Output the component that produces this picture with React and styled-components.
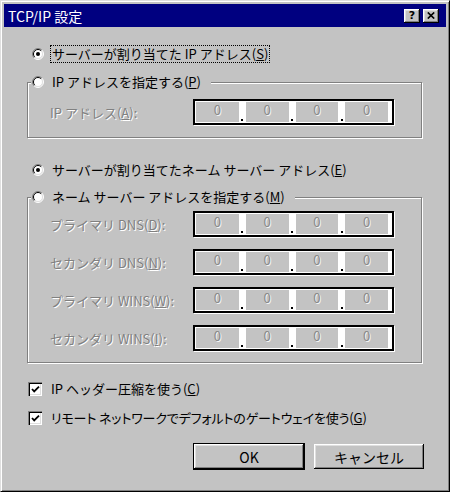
import { createGlobalStyle, styled } from "styled-components";

const FACE = "#c3c3c3";

const GlobalStyle = createGlobalStyle`
  html, body { margin: 0; padding: 0; background: ${FACE}; }
  body { font-family: "Noto Sans CJK JP", "Noto Sans", sans-serif; }
`;

const Window = styled.div`
  box-sizing: border-box;
  width: 450px;
  height: 492px;
  padding: 3px;
  display: flex;
  flex-direction: column;
  background: ${FACE};
  border: 1px solid;
  border-color: #dfdfdf #000 #000 #dfdfdf;
  box-shadow: inset 1px 1px 0 #fff, inset -1px -1px 0 #808080;
  font-family: "Noto Sans CJK JP", "Noto Sans", sans-serif;
  font-size: 13px;
  color: #000;
`;

const TitleBar = styled.div`
  height: 23px;
  flex: 0 0 auto;
  display: flex;
  align-items: center;
  justify-content: space-between;
  padding: 0 7px 0 4px;
  background: #000080;
  color: #fff;
`;

const Title = styled.span`
  font-size: 14px;
  line-height: 16px;
`;

const Caption = styled.div`
  display: flex;
  gap: 3px;
`;

const CapButton = styled.span`
  box-sizing: border-box;
  width: 16px;
  height: 14px;
  display: flex;
  align-items: center;
  justify-content: center;
  background: ${FACE};
  color: #000;
  font-family: "DejaVu Sans", sans-serif;
  font-weight: bold;
  font-size: 11px;
  line-height: 1;
  box-shadow: inset -1px -1px 0 #000, inset 1px 1px 0 #fff,
    inset -2px -2px 0 #808080, inset 2px 2px 0 #dfdfdf;
`;

const Body = styled.div`
  display: flex;
  flex-direction: column;
  padding: 17px 21px 0 23px;
`;

const OptionRow = styled.div`
  display: flex;
  align-items: center;
  gap: ${(p) => p.$gap || 6}px;
  height: 20px;
  margin-top: ${(p) => p.$mt || 0}px;
  padding-left: ${(p) => p.$pl || 0}px;
`;

const OptionLabel = styled.span`
  line-height: 16px;
  padding: 0 1px;
  border: 1px dotted ${(p) => (p.$focused ? "#000" : "transparent")};
  white-space: nowrap;
  font-feature-settings: ${(p) => (p.$narrow ? '"palt"' : "normal")};
  letter-spacing: ${(p) => (p.$narrow ? "-0.15px" : "normal")};
`;

const Group = styled.fieldset`
  margin: ${(p) => p.$mt}px 3px 0 0;
  padding: 0;
  min-width: 0;
  border: 1px solid #808080;
  box-shadow: inset 1px 1px 0 #fff, 1px 1px 0 #fff;
`;

const Legend = styled.legend`
  display: flex;
  align-items: center;
  gap: 6px;
  height: 20px;
  margin-left: 3px;
  padding: 0 8px 0 1px;
  background: ${FACE};
`;

const Rows = styled.div`
  display: flex;
  flex-direction: column;
  gap: 12px;
  padding: ${(p) => p.$pt}px 0 ${(p) => p.$pb}px 22px;
`;

const FieldRow = styled.div`
  display: grid;
  grid-template-columns: 143px 201px;
  align-items: center;
  height: 26px;
`;

const Disabled = styled.span`
  color: #808080;
  text-shadow: 1px 1px 0 #fff;
  white-space: nowrap;
`;

const IpBox = styled.div`
  box-sizing: border-box;
  width: 201px;
  height: 26px;
  display: flex;
  padding: 1px 4px 1px 1px;
  background: #fff;
  border: 2px solid #000;
  box-shadow: 1px 1px 0 #fff;
`;

const Octet = styled.span`
  flex: 1;
  display: flex;
  justify-content: center;
  background: ${FACE};
  color: #8a8a8a;
  text-shadow: 1px 1px 0 #f4f4f4;
  font-size: 13px;
  line-height: 16px;
`;

const Dot = styled.span`
  flex: 0 0 7px;
  display: flex;
  justify-content: center;
  align-items: flex-end;
  padding-bottom: 1px;
  &::after {
    content: "";
    width: 2px;
    height: 2px;
    background: #000;
  }
`;

const CheckBox = styled.span`
  box-sizing: border-box;
  width: 14px;
  height: 14px;
  flex: 0 0 14px;
  display: flex;
  align-items: center;
  justify-content: center;
  background: #fff;
  box-shadow: inset 1px 1px 0 #808080, inset 2px 2px 0 #000,
    inset -1px -1px 0 #fff, inset -2px -2px 0 #dfdfdf;
`;

const ButtonRow = styled.div`
  display: flex;
  justify-content: flex-end;
  gap: 8px;
  margin-top: 15px;
`;

const Button = styled.button`
  box-sizing: border-box;
  width: 112px;
  height: 27px;
  padding: 0;
  background: ${FACE};
  font-family: inherit;
  font-size: 14px;
  color: #000;
  border: 1px solid ${(p) => (p.$default ? "#000" : FACE)};
  box-shadow: inset -1px -1px 0 #000, inset 1px 1px 0 #fff,
    inset -2px -2px 0 #808080, inset 2px 2px 0 #dfdfdf;
`;

function Radio({ checked }) {
  return (
    <svg width="12" height="12" viewBox="0 0 12 12" style={{ flex: "0 0 12px" }}>
      <circle cx="6" cy="6" r="5" fill="#fff" />
      <path d="M2.1 9.9 A5.5 5.5 0 0 1 9.9 2.1" stroke="#808080" fill="none" />
      <path d="M9.9 2.1 A5.5 5.5 0 0 1 2.1 9.9" stroke="#fff" fill="none" />
      <path d="M2.8 9.2 A4.5 4.5 0 0 1 9.2 2.8" stroke="#000" fill="none" />
      <path d="M9.2 2.8 A4.5 4.5 0 0 1 2.8 9.2" stroke="#dfdfdf" fill="none" />
      {checked && <circle cx="6" cy="6" r="2" fill="#000" />}
    </svg>
  );
}

function Check() {
  return (
    <CheckBox>
      <svg width="9" height="9" viewBox="0 0 9 9">
        <path d="M1 4 L3.2 6.4 L8 1.6" stroke="#000" strokeWidth="1.8" fill="none" />
      </svg>
    </CheckBox>
  );
}

function IpField() {
  return (
    <IpBox>
      <Octet>0</Octet>
      <Dot />
      <Octet>0</Octet>
      <Dot />
      <Octet>0</Octet>
      <Dot />
      <Octet>0</Octet>
    </IpBox>
  );
}

const servers = [
  ["プライマリ DNS(", "D", "):"],
  ["セカンダリ DNS(", "N", "):"],
  ["プライマリ WINS(", "W", "):"],
  ["セカンダリ WINS(", "I", "):"],
];

export default function App() {
  return (
    <Window>
      <GlobalStyle />
      <TitleBar>
        <Title>TCP/IP 設定</Title>
        <Caption>
          <CapButton>?</CapButton>
          <CapButton>
            <svg width="8" height="7" viewBox="0 0 8 7">
              <path d="M0.8 0.5 L7.2 6.5 M7.2 0.5 L0.8 6.5" stroke="#000" strokeWidth="1.7" />
            </svg>
          </CapButton>
        </Caption>
      </TitleBar>
      <Body>
        <OptionRow $pl={5}>
          <Radio checked />
          <OptionLabel $focused>
            サーバーが割り当てた IP アドレス(<u>S</u>)
          </OptionLabel>
        </OptionRow>
        <Group $mt={8}>
          <Legend>
            <Radio />
            <OptionLabel>
              IP アドレスを指定する(<u>P</u>)
            </OptionLabel>
          </Legend>
          <Rows $pt={7} $pb={12}>
            <FieldRow>
              <Disabled>
                IP アドレス(<u>A</u>):
              </Disabled>
              <IpField />
            </FieldRow>
          </Rows>
        </Group>
        <OptionRow $pl={5} $mt={22}>
          <Radio checked />
          <OptionLabel>
            サーバーが割り当てたネーム サーバー アドレス(<u>E</u>)
          </OptionLabel>
        </OptionRow>
        <Group $mt={7}>
          <Legend>
            <Radio />
            <OptionLabel>
              ネーム サーバー アドレスを指定する(<u>M</u>)
            </OptionLabel>
          </Legend>
          <Rows $pt={4} $pb={11}>
            {servers.map(([a, key, b]) => (
              <FieldRow key={key}>
                <Disabled>
                  {a}
                  <u>{key}</u>
                  {b}
                </Disabled>
                <IpField />
              </FieldRow>
            ))}
          </Rows>
        </Group>
        <OptionRow $pl={1} $gap={7} $mt={16}>
          <Check />
          <OptionLabel>
            IP ヘッダー圧縮を使う(<u>C</u>)
          </OptionLabel>
        </OptionRow>
        <OptionRow $pl={1} $gap={7} $mt={9}>
          <Check />
          <OptionLabel $narrow>
            リモート ネットワークでデフォルトのゲートウェイを使う(<u>G</u>)
          </OptionLabel>
        </OptionRow>
        <ButtonRow>
          <Button $default>OK</Button>
          <Button>キャンセル</Button>
        </ButtonRow>
      </Body>
    </Window>
  );
}
